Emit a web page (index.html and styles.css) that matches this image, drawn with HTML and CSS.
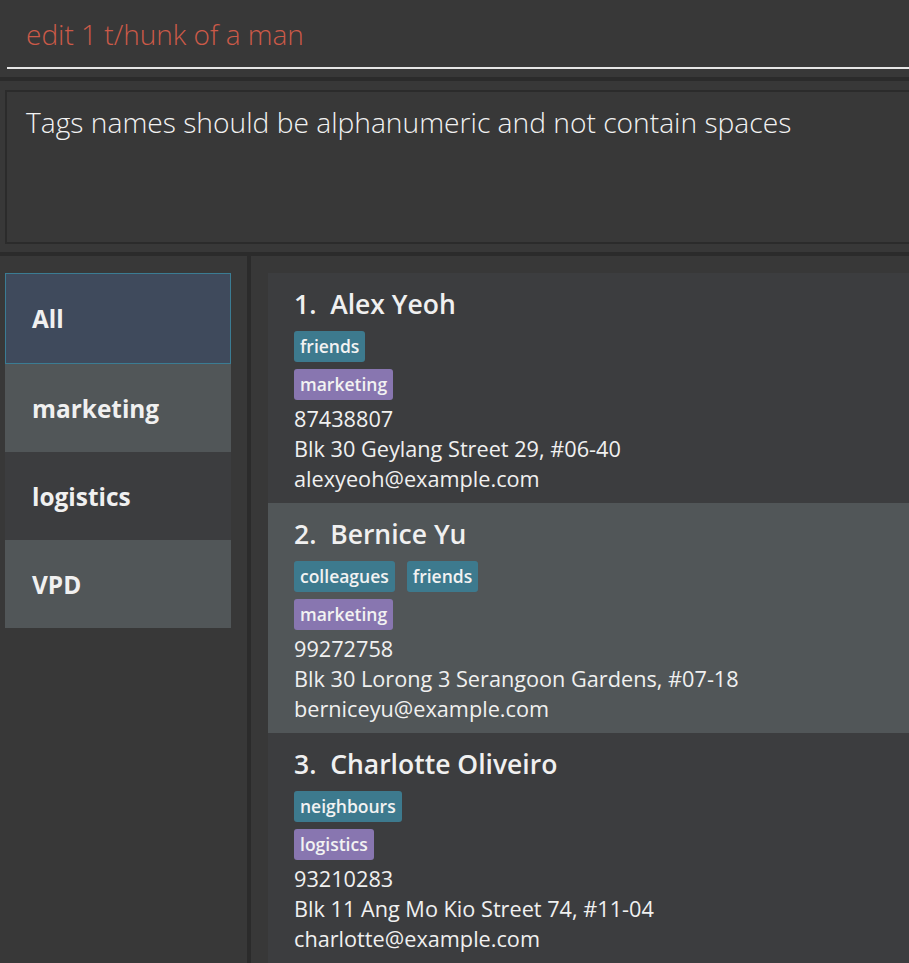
FILE: index.html
```html
<!DOCTYPE html>
<html>
<head>
<meta charset="utf-8">
<link rel="stylesheet" href="styles.css">
</head>
<body>
<div class="app">
  <div class="command">
    <div class="command-field">edit 1 t/hunk of a man</div>
  </div>
  <div class="sep"></div>
  <div class="result-wrap">
    <div class="result-box">Tags names should be alphanumeric and not contain spaces</div>
  </div>
  <div class="sep"></div>
  <div class="main">
    <div class="left">
      <div class="group selected">All</div>
      <div class="group alt">marketing</div>
      <div class="group">logistics</div>
      <div class="group alt">VPD</div>
    </div>
    <div class="divider"></div>
    <div class="right">
      <div class="card">
        <div class="name">1.&nbsp; Alex Yeoh</div>
        <div class="tags"><span class="tag">friends</span></div>
        <div class="tags"><span class="tag group-tag">marketing</span></div>
        <div class="line">87438807</div>
        <div class="line">Blk 30 Geylang Street 29, #06-40</div>
        <div class="line">alexyeoh@example.com</div>
      </div>
      <div class="card alt">
        <div class="name">2.&nbsp; Bernice Yu</div>
        <div class="tags"><span class="tag">colleagues</span><span class="tag">friends</span></div>
        <div class="tags"><span class="tag group-tag">marketing</span></div>
        <div class="line">99272758</div>
        <div class="line">Blk 30 Lorong 3 Serangoon Gardens, #07-18</div>
        <div class="line">berniceyu@example.com</div>
      </div>
      <div class="card">
        <div class="name">3.&nbsp; Charlotte Oliveiro</div>
        <div class="tags"><span class="tag">neighbours</span></div>
        <div class="tags"><span class="tag group-tag">logistics</span></div>
        <div class="line">93210283</div>
        <div class="line">Blk 11 Ang Mo Kio Street 74, #11-04</div>
        <div class="line">charlotte@example.com</div>
      </div>
    </div>
  </div>
</div>
</body>
</html>
```
FILE: styles.css
```css
html, body {
  margin: 0;
  padding: 0;
  background: #383838;
  overflow: hidden;
}
.app {
  width: 909px;
  height: 963px;
  display: flex;
  flex-direction: column;
  font-family: "Open Sans", "Noto Sans", sans-serif;
  color: #f0f0f0;
  overflow: hidden;
}
.command {
  height: 77px;
  padding-left: 7px;
  box-sizing: border-box;
}
.command-field {
  height: 69px;
  box-sizing: border-box;
  border-bottom: 2px solid #e6e6e6;
  padding: 16px 0 0 19px;
  font-size: 28px;
  font-weight: 300;
  line-height: 36px;
  color: #cc5a48;
  white-space: nowrap;
}
.sep {
  height: 4px;
  background: #2b2b2b;
  flex: none;
}
.result-wrap {
  padding: 9px 0 8px 5px;
}
.result-box {
  height: 154px;
  box-sizing: border-box;
  border: 2px solid #2b2b2b;
  border-right: 0;
  padding: 12px 0 0 19px;
  font-size: 28.2px;
  font-weight: 300;
  line-height: 36px;
  color: #f2f2f2;
  white-space: nowrap;
}
.main {
  flex: 1;
  display: flex;
  min-height: 0;
}
.left {
  width: 247px;
  box-sizing: border-box;
  padding: 17px 16px 0 5px;
  display: flex;
  flex-direction: column;
}
.group {
  height: 88px;
  box-sizing: border-box;
  display: flex;
  align-items: center;
  padding-left: 27px;
  background: #3c3d3f;
  font-size: 24.4px;
  font-weight: 700;
  color: #f0f0f0;
}
.group.alt {
  background: #515658;
}
.group.selected {
  height: 91px;
  background: #3f4a5c;
  border: 1px solid #3b7c93;
  padding-left: 26px;
}
.divider {
  width: 4px;
  background: #2b2b2b;
  flex: none;
}
.right {
  flex: 1;
  padding: 17px 0 0 17px;
  display: flex;
  flex-direction: column;
}
.card {
  height: 230px;
  box-sizing: border-box;
  padding: 13px 0 0 26px;
  background: #3c3d3f;
  flex: none;
}
.card.alt {
  background: #515658;
}
.name {
  font-size: 26.5px;
  font-weight: 600;
  line-height: 36px;
  height: 36px;
  margin-bottom: 9px;
  white-space: nowrap;
}
.tags {
  display: flex;
  gap: 12px;
  height: 31px;
  margin-bottom: 7px;
}
.tags + .tags {
  height: 32px;
  margin-bottom: 3px;
}
.tag {
  display: inline-block;
  height: 31px;
  line-height: 31px;
  padding: 0 6px;
  background: #3d7a8e;
  border-radius: 3px;
  font-size: 17.5px;
  font-weight: 600;
  color: #f2f2f2;
}
.tag.group-tag {
  background: #8876b0;
}
.line {
  font-size: 21.7px;
  line-height: 30px;
  height: 30px;
  white-space: nowrap;
  color: #f0f0f0;
}
```
